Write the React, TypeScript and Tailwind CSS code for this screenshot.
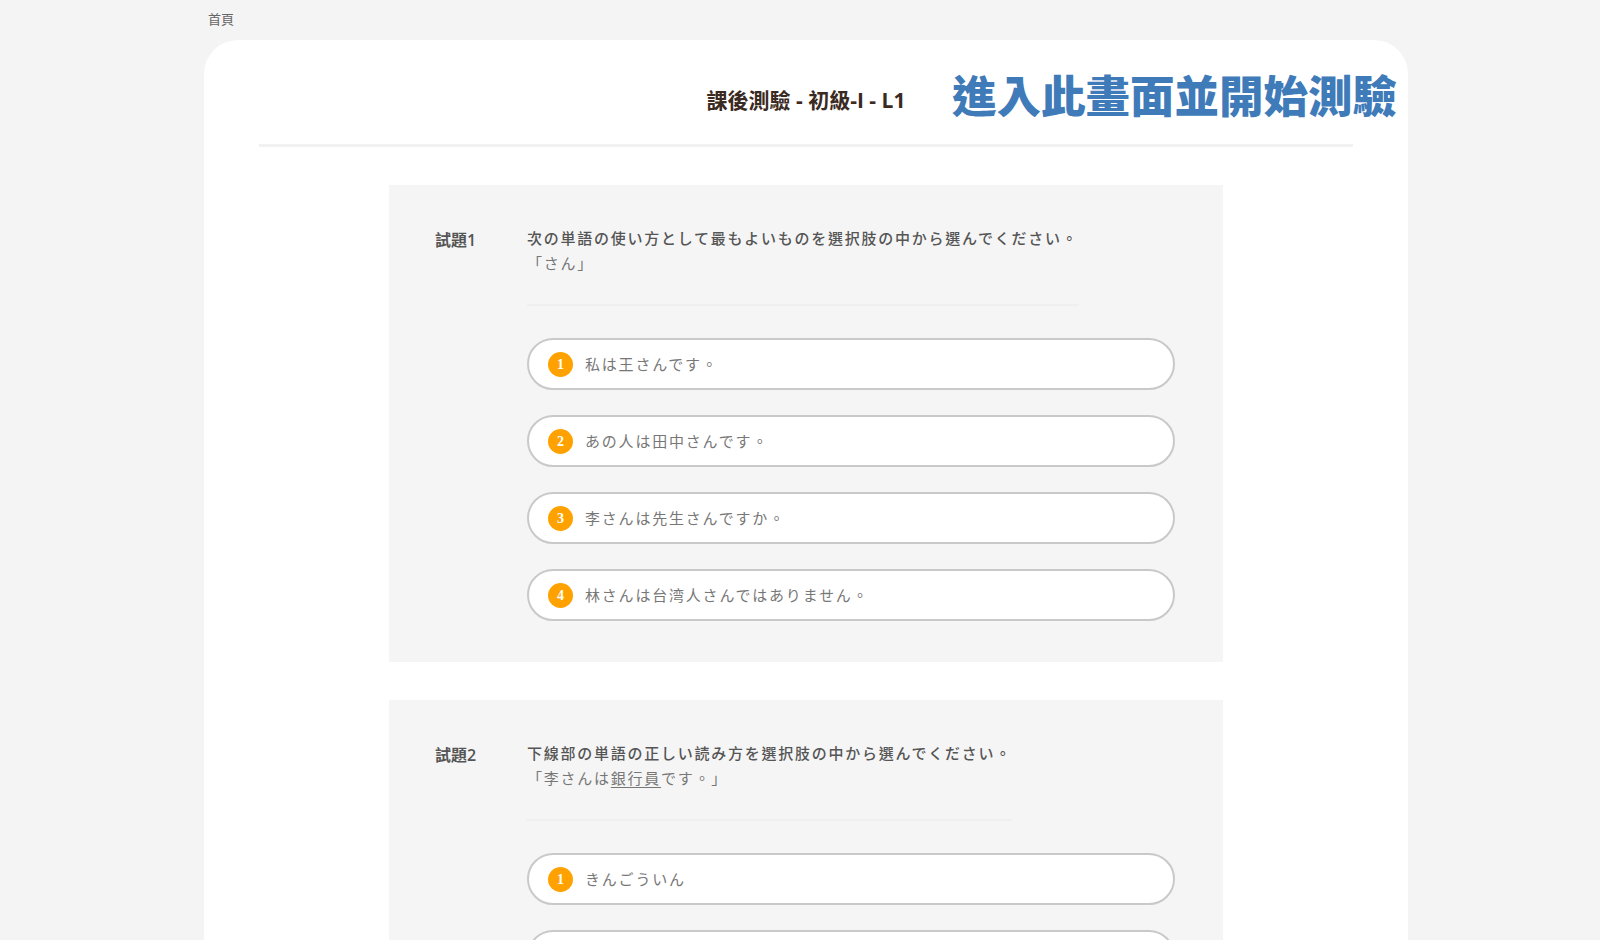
import React from 'react';

type Question = {
  no: number;
  prompt: string;
  sentence: React.ReactNode;
  options: string[];
};

const questions: Question[] = [
  {
    no: 1,
    prompt: '次の単語の使い方として最もよいものを選択肢の中から選んでください。',
    sentence: '「さん」',
    options: [
      '私は王さんです。',
      'あの人は田中さんです。',
      '李さんは先生さんですか。',
      '林さんは台湾人さんではありません。',
    ],
  },
  {
    no: 2,
    prompt: '下線部の単語の正しい読み方を選択肢の中から選んでください。',
    sentence: (
      <>
        「李さんは<span className="underline underline-offset-[3px]">銀行員</span>です。」
      </>
    ),
    options: ['きんごういん', 'ぎんこういん', 'きんこういん', 'ぎんごういん'],
  },
];

const font = "font-['Open_Sans','Noto_Sans_CJK_TC','Noto_Sans_CJK_JP',sans-serif]";

function Option({ index, text }: { index: number; text: string }) {
  return (
    <div className="flex h-[52px] items-center gap-[12px] rounded-full border-2 border-[#c9c9c9] bg-white pl-[19px]">
      <span className="flex h-[25px] w-[25px] shrink-0 items-center justify-center rounded-full bg-[#ffa200] pt-[1px] font-['Liberation_Serif',serif] text-[14px] font-bold text-white">
        {index}
      </span>
      <span className="text-[15px] tracking-[1.8px] text-[#777]">{text}</span>
    </div>
  );
}

function QuestionCard({ q }: { q: Question }) {
  return (
    <section className="flex w-[834px] bg-[#f5f5f5] pb-[41px] pl-[46px] pr-[48px] pt-[41px]">
      <div className="w-[92px] shrink-0 pt-[2px] text-[16px] font-semibold text-[#555]">試題{q.no}</div>
      <div className="flex w-[648px] flex-col">
        <div className="self-start border-b-2 border-[#efefef] pb-[28px] text-[15px] leading-[25px] tracking-[1.75px]">
          <p className="font-medium text-[#555]">{q.prompt}</p>
          <p className="text-[#777]">{q.sentence}</p>
        </div>
        <div className="mt-[32px] flex flex-col gap-[25px]">
          {q.options.map((o, i) => (
            <Option key={i} index={i + 1} text={o} />
          ))}
        </div>
      </div>
    </section>
  );
}

export default function App() {
  return (
    <div className={`min-h-screen bg-[#f4f4f4] ${font}`}>
      <div className="ml-[204px] w-[1204px]">
        <div className="h-[40px] pl-[4px] pt-[10px] text-[13px] text-[#666]">首頁</div>
        <main className="relative rounded-t-[34px] bg-white pb-[40px]">
          <header className="mx-[55px] flex h-[107px] items-center justify-center border-b-[3px] border-[#f2f2f2] pt-[18px]">
            <h1 className="text-[21px] font-bold text-[#3a2a22]">課後測驗 - 初級-I - L1</h1>
          </header>
          <div className="absolute right-[11px] top-[34px] text-[44.5px] font-black leading-none text-[#3f7bb9]">
            進入此畫面並開始測驗
          </div>
          <div className="mt-[38px] flex flex-col items-center gap-[38px]">
            {questions.map((q) => (
              <QuestionCard key={q.no} q={q} />
            ))}
          </div>
        </main>
      </div>
    </div>
  );
}
